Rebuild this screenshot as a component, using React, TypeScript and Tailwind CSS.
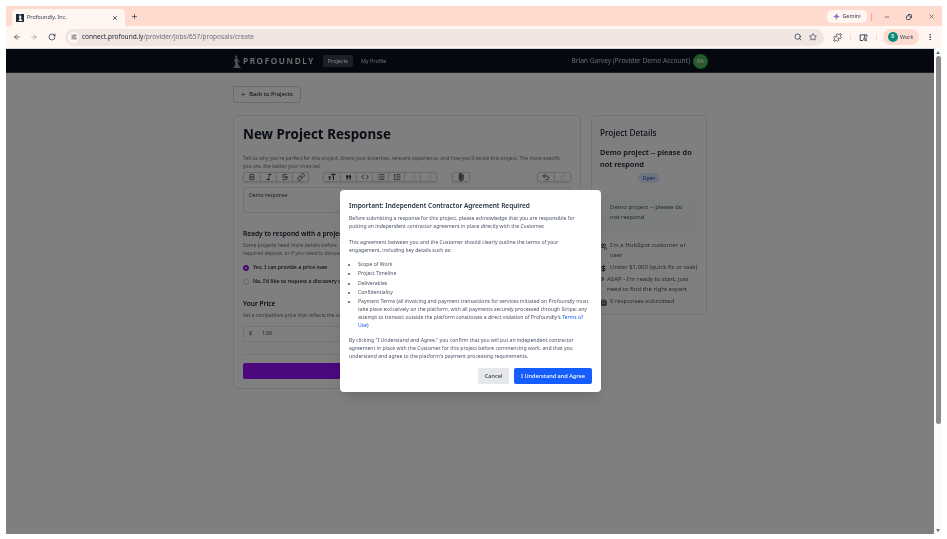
import { ArrowLeft, ArrowRight, RotateCw, SlidersHorizontal, Search, Star, Puzzle, X, Plus, Minus, MoreVertical, Bold, Italic, Strikethrough, Link, Code, List, ListOrdered, IndentDecrease, IndentIncrease, Paperclip, Undo2, Redo2, Users, DollarSign, Clock, Building2 } from "lucide-react";
import { FaQuoteRight } from "react-icons/fa";

const font = { fontFamily: '"Noto Sans", "Open Sans", sans-serif' };

function TypeIcon({ size, className }: { size: number; className?: string }) {
  return (
    <svg width={size} height={size} viewBox="0 0 24 24" fill="none" stroke="currentColor" strokeWidth={3} className={className}>
      <path d="M9 4h14M16 4v17M1 12h8M5 12v9" />
    </svg>
  );
}

function QuoteIcon({ className }: { className?: string }) {
  return <FaQuoteRight size={5} className={className} />;
}

function AttachIcon({ size, className }: { size: number; className?: string }) {
  return <Paperclip size={size} strokeWidth={2.6} className={"-rotate-45 " + (className ?? "")} />;
}

function ToolGroup({ icons, disabledFrom, className }: { icons: any[]; disabledFrom?: number; className?: string }) {
  return (
    <div className={"flex h-[10px] rounded-[2px] border border-gray-300 shadow-sm " + (className ?? "")}>
      {icons.map((I, i) => (
        <div key={i} className={"flex w-[16px] items-center justify-center border-gray-300 " + (i ? "border-l" : "")}>
          <I size={8} strokeWidth={2.2} className={disabledFrom !== undefined && i >= disabledFrom ? "text-gray-300" : "text-gray-800"} />
        </div>
      ))}
    </div>
  );
}

function Radio({ on, label }: { on?: boolean; label: string }) {
  return (
    <div className="flex items-center gap-[4px]">
      <div className={"flex h-[6px] w-[6px] items-center justify-center rounded-full border " + (on ? "border-purple-700 bg-purple-700" : "border-gray-300")}>
        {on && <div className="h-[2px] w-[2px] rounded-full bg-white" />}
      </div>
      <span className="whitespace-nowrap text-[5.2px] font-semibold text-gray-800">{label}</span>
    </div>
  );
}

function Detail({ icon: I, size = 7, gap, children }: { icon: any; size?: number; gap?: string; children: React.ReactNode }) {
  return (
    <div className={"flex items-start text-[6px] leading-[10px] text-gray-600 " + (gap ?? "gap-[3px]")}>
      <I size={size} strokeWidth={2.6} className="mt-[3px] shrink-0 text-gray-900" />
      <div>{children}</div>
    </div>
  );
}

function LogoFigure({ className }: { className?: string }) {
  return (
    <svg viewBox="0 0 10 16" className={className} fill="currentColor">
      <circle cx="4" cy="2" r="1.4" />
      <path d="M2.5 4h3l1.5 3 2 1-.4.8L5.5 7.5 6 10l2 4.5H9.5V16H.5v-1.5H2L3 10 1.5 7.5z" />
    </svg>
  );
}

function GeminiIcon() {
  return (
    <svg width="7" height="7" viewBox="0 0 24 24">
      <defs>
        <linearGradient id="gem" x1="0" y1="0" x2="1" y2="1">
          <stop offset="0" stopColor="#4285f4" />
          <stop offset="0.6" stopColor="#9b72cb" />
          <stop offset="1" stopColor="#d96570" />
        </linearGradient>
      </defs>
      <path fill="url(#gem)" d="M12 0c1 7 4 10.500 12 12-8 1.500-11 5-12 12-1-7-4-10.500-12-12C8 10.500 11 7 12 0z" />
    </svg>
  );
}

export default function App() {
  return (
    <div style={font} className="flex h-[539px] w-[947px] flex-col overflow-hidden bg-white pb-[5px] pl-[6px] pr-[5px] pt-[6px] blur-[0.4px]">
      <div className="flex h-[20px] items-end bg-[#ffdbcf] pl-[6px]">
        <div className="flex h-[17px] w-[113px] items-center rounded-t-[5px] bg-[#fff5f1] px-[4px] text-[5.4px] text-gray-700">
          <div className="mr-[3px] flex h-[8px] w-[8px] items-center justify-center bg-gray-800 text-white">
            <LogoFigure className="h-[7px] w-[5px]" />
          </div>
          <span>Profoundly, Inc.</span>
          <X size={6} strokeWidth={3} className="ml-auto mr-[3px] text-gray-800" />
        </div>
        <Plus size={7} strokeWidth={2.5} className="mb-[6px] ml-[6px] text-gray-700" />
        <div className="mb-[3px] ml-auto flex items-center text-gray-700">
          <div className="flex h-[13px] w-[40px] items-center justify-center gap-[2px] rounded-[5px] bg-[#fff5f1] text-[5.4px]">
            <GeminiIcon />
            <span>Gemini</span>
          </div>
          <div className="ml-[4px] h-[8px] w-px bg-[#f2a68f]" />
          <Minus size={6} strokeWidth={2.5} className="ml-[12px]" />
          <svg width="6" height="6" viewBox="0 0 24 24" fill="none" stroke="currentColor" strokeWidth={3.5} className="ml-[16px]">
            <rect x="2" y="7" width="15" height="15" rx="3" />
            <path d="M8 2h11a3 3 0 0 1 3 3v11" />
          </svg>
          <X size={7} strokeWidth={2} className="ml-[16px] mr-[7px]" />
        </div>
      </div>
      <div className="flex h-[22px] items-center bg-[#fff5f1] text-gray-700">
        <ArrowLeft size={8} strokeWidth={2.2} className="ml-[7px]" />
        <ArrowRight size={8} strokeWidth={2.2} className="ml-[9px] text-gray-400" />
        <RotateCw size={8} strokeWidth={2.4} className="ml-[10px]" />
        <div className="ml-[9px] flex h-[17px] w-[759px] items-center rounded-full bg-[#f1e5e2] pl-[3px] pr-[7px]">
          <div className="flex h-[11px] w-[11px] items-center justify-center rounded-full bg-[#fff5f1]">
            <SlidersHorizontal size={6} strokeWidth={2.4} />
          </div>
          <span className="ml-[3px] text-[6.5px]">
            <span className="text-gray-800">connect.profound.ly</span>
            <span className="text-gray-500">/provider/jobs/657/proposals/create</span>
          </span>
          <Search size={8} strokeWidth={2.4} className="ml-auto" />
          <Star size={8} strokeWidth={2.2} className="ml-[7px]" />
        </div>
        <Puzzle size={9} strokeWidth={2.2} className="ml-[9px]" />
        <div className="ml-[8px] h-[7px] w-px bg-[#f1dcd5]" />
        <svg width="9" height="9" viewBox="0 0 24 24" fill="none" stroke="currentColor" strokeWidth={2.6} className="ml-[8px]">
          <path d="M11 20H3V5h18v6M15 5v6" />
          <circle cx="16" cy="16" r="3.500" />
          <path d="m19 19 3 3" />
        </svg>
        <div className="ml-[8px] h-[7px] w-px bg-[#f1dcd5]" />
        <div className="ml-[6px] flex h-[16px] w-[36px] items-center gap-[2px] rounded-full bg-[#ffdbcf] pl-[5px] text-[5.4px]">
          <div className="flex h-[10px] w-[10px] items-center justify-center rounded-full bg-[#0b8a7a] text-[5px] text-white">B</div>
          <span>Work</span>
        </div>
        <MoreVertical size={8} strokeWidth={2.5} className="ml-[7px]" />
      </div>

      <div className="flex min-h-0 flex-1">
        <div className="relative flex-1 overflow-hidden border-t border-gray-300 bg-white">
          <nav className="flex h-[24px] items-center justify-between border-b border-gray-700 bg-[#0a101e] pl-[227px] pr-[226px] pt-[1px] text-gray-300">
            <div className="flex items-center">
              <LogoFigure className="h-[13px] w-[8px] text-gray-400" />
              <span className="ml-[2px] text-[8.2px] font-semibold tracking-[0.2em] text-gray-200">PROFOUNDLY</span>
              <span className="ml-[8px] rounded-[2px] bg-gray-700 px-[5px] py-[2px] text-[5.4px] text-white">Projects</span>
              <span className="ml-[8px] text-[5.4px]">My Profile</span>
            </div>
            <div className="flex items-center gap-[3px]">
              <span className="text-[6.6px]">Brian Garvey (Provider Demo Account)</span>
              <div className="flex h-[15px] w-[15px] items-center justify-center rounded-full border border-green-500 bg-[#58b458] text-[5.5px] text-white">BA</div>
            </div>
          </nav>

          <main className="ml-[227px] mt-[13px] w-[474px]">
            <button className="flex h-[17px] w-[68px] items-center justify-center gap-[3px] rounded-[3px] border border-gray-300 text-[5.7px] font-medium text-gray-800">
              <ArrowLeft size={5} strokeWidth={2.5} />
              Back to Projects
            </button>
            <div className="mt-[12px] flex items-start gap-[10px]">
              <div className="h-[274px] w-[348px] rounded-[4px] border border-gray-200 px-[9px] pt-[8px]">
                <h1 className="text-[13.4px] font-bold leading-[20px] text-gray-900">New Project Response</h1>
                <p className="mt-[10px] text-[5px] leading-[8px] text-gray-500">
                  Tell us why you're perfect for this project. Share your expertise, relevant experience, and how you'll tackle this project. The more specific<br />you are, the better your chances!
                </p>
                <div className="mt-[2px] flex">
                  <ToolGroup icons={[Bold, Italic, Strikethrough, Link]} />
                  <ToolGroup className="ml-[14px]" icons={[TypeIcon, QuoteIcon, Code, List, ListOrdered, IndentDecrease, IndentIncrease]} disabledFrom={5} />
                  <ToolGroup className="ml-[15px]" icons={[AttachIcon]} />
                  <ToolGroup className="ml-auto" icons={[Undo2, Redo2]} disabledFrom={1} />
                </div>
                <div className="mt-[5px] h-[26px] rounded-[2px] border border-gray-200 px-[5px] py-[4px] text-[5.2px] text-gray-700">Demo response</div>
                <h2 className="mt-[16px] text-[6.6px] font-semibold leading-[10px] text-gray-900">Ready to respond with a project</h2>
                <p className="mt-[2px] text-[5px] leading-[8px] text-gray-500">
                  Some projects need more details before<br />required deposit, or if you need to discuss
                </p>
                <div className="mt-[7px] flex flex-col gap-[6px]">
                  <Radio on label="Yes, I can provide a price now" />
                  <Radio label="No, I'd like to request a discovery call" />
                </div>
                <h3 className="mt-[13px] text-[6.6px] font-semibold leading-[10px] text-gray-900">Your Price</h3>
                <p className="mt-[2px] whitespace-nowrap text-[5px] leading-[8px] text-gray-500">Set a competitive price that reflects the value</p>
                <div className="mt-[7px] flex h-[16px] items-center rounded-[2px] border border-gray-200 px-[5px] text-[5.2px] text-gray-700">
                  <span>$</span>
                  <span className="ml-[10px]">1.00</span>
                </div>
                <div className="mt-[12px] border-t border-gray-200" />
                <div className="mt-[8px] h-[16px] rounded-[2px] bg-purple-600" />
              </div>

              <aside className="h-[200px] w-[116px] rounded-[4px] border border-gray-200 px-[8px] pt-[11px]">
                <h2 className="text-[8.2px] font-medium leading-[12px] text-gray-900">Project Details</h2>
                <h3 className="mt-[7px] text-[7.4px] font-semibold leading-[12px] text-gray-900">Demo project -- please do not respond</h3>
                <div className="mt-[3px] flex justify-center">
                  <span className="rounded-full bg-blue-100 px-[5px] text-[5px] leading-[10px] text-blue-800">Open</span>
                </div>
                <div className="mt-[11px] h-[38px] rounded-[2px] bg-gray-50 px-[10px] py-[8px] text-[6px] leading-[10px] text-gray-600">Demo project -- please do not respond</div>
                <div className="mt-[8px] flex flex-col gap-[2px]">
                  <Detail icon={Users}>I'm a HubSpot customer or user</Detail>
                  <Detail icon={DollarSign}>Under $1,000 (quick fix or task)</Detail>
                  <Detail icon={Clock} size={4} gap="gap-[3px]">ASAP - I'm ready to start, just need to find the right expert</Detail>
                  <Detail icon={Building2}>0 responses submitted</Detail>
                </div>
              </aside>
            </div>
          </main>

          <div className="absolute inset-0 z-10 bg-black/50" />
          <div className="absolute left-[334px] top-[141px] z-20 h-[202px] w-[261px] rounded-[4px] bg-white px-[9px] pt-[11px] shadow-lg">
            <h2 className="text-[6.5px] font-semibold leading-[10px] text-gray-800">Important: Independent Contractor Agreement Required</h2>
            <div className="mt-[3px] text-[5.1px] leading-[8px] text-gray-600">
              <p>Before submitting a response for this project, please acknowledge that you are responsible for putting an independent contractor agreement in place directly with the Customer.</p>
              <p className="mt-[8px]">This agreement between you and the Customer should clearly outline the terms of your<br />engagement, including key details such as:</p>
              <ul className="ml-[8px] mt-[6px] list-disc pl-[1px]">
                <li className="mb-[1.3px]">Scope of Work</li>
                <li className="mb-[1.3px]">Project Timeline</li>
                <li className="mb-[1.3px]">Deliverables</li>
                <li className="mb-[1.3px]">Confidentiality</li>
                <li>Payment Terms (all invoicing and payment transactions for services initiated on Profoundly must take place exclusively on the platform, with all payments securely processed through Stripe; any attempt to transact outside the platform constitutes a direct violation of Profoundly's <span className="text-blue-600">Terms of Use</span>)</li>
              </ul>
              <p className="mt-[7px]">By clicking "I Understand and Agree," you confirm that you will put an independent contractor agreement in place with the Customer for this project before commencing work, and that you understand and agree to the platform's payment processing requirements.</p>
            </div>
            <div className="mt-[8px] flex justify-end gap-[5px]">
              <button className="h-[16px] w-[31px] rounded-[2px] bg-gray-200 text-[5.6px] font-medium text-gray-700">Cancel</button>
              <button className="h-[16px] w-[78px] rounded-[2px] bg-blue-600 text-[5.6px] font-medium text-white">I Understand and Agree</button>
            </div>
          </div>
        </div>
        <div className="flex w-[8px] flex-col items-center bg-[#fbfbfb] pt-[3px]">
          <div className="h-0 w-0 border-x-[2px] border-b-[3px] border-x-transparent border-b-gray-500" />
          <div className="mt-[2px] h-[368px] w-[5px] rounded-full bg-[#8a8a8a]" />
          <div className="mt-auto mb-[2px] h-0 w-0 border-x-[2px] border-t-[3px] border-x-transparent border-t-gray-500" />
        </div>
      </div>
    </div>
  );
}
